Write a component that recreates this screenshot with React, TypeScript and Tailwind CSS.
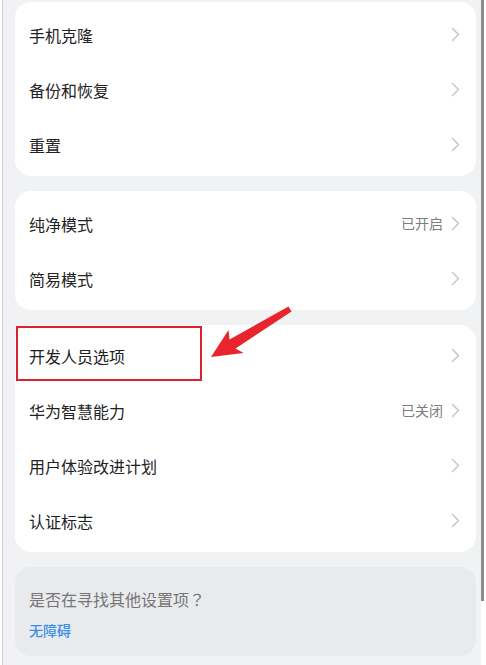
import React from "react"

type Item = { label: string; value?: string }

const groups: Item[][] = [
  [{ label: "手机克隆" }, { label: "备份和恢复" }, { label: "重置" }],
  [{ label: "纯净模式", value: "已开启" }, { label: "简易模式" }],
  [
    { label: "开发人员选项" },
    { label: "华为智慧能力", value: "已关闭" },
    { label: "用户体验改进计划" },
    { label: "认证标志" },
  ],
]

function Chevron() {
  return (
    <svg width="9" height="15" viewBox="0 0 9 15" fill="none">
      <path d="M1.5 1.5 L7.5 7.5 L1.5 13.5" stroke="#c6c6c6" strokeWidth="1.5" strokeLinecap="round" strokeLinejoin="round" />
    </svg>
  )
}

function Row({ item }: { item: Item }) {
  return (
    <div className="flex h-[55px] items-center pl-[14px] pr-[16px]">
      <span className="flex-1 text-[16px] text-[#222222]">{item.label}</span>
      {item.value && <span className="mr-[8px] text-[14px] text-[#7d7d7d]">{item.value}</span>}
      <Chevron />
    </div>
  )
}

export default function App() {
  return (
    <div
      lang="zh-CN"
      className="relative h-[665px] w-[486px] overflow-hidden bg-white"
      style={{ fontFamily: '"Noto Sans CJK SC", "Noto Sans", sans-serif' }}
    >
      <div className="ml-[2px] h-full w-[479px] border-l border-[#d2d2d2] bg-[#f1f2f4] pt-[2px]">
        <div className="ml-[12px] flex w-[461px] flex-col gap-[15px]">
          {groups.map((g, i) => (
            <div key={i} className={`relative rounded-[16px] bg-white pb-[4px] ${i === 2 ? "pt-[3px]" : "pt-[5px]"}`}>
              {g.map((item) => (
                <Row key={item.label} item={item} />
              ))}
              {i === 2 && (
                <div className="absolute left-[1px] top-[1px] h-[55px] w-[186px] border-2 border-[#d8242e]" />
              )}
            </div>
          ))}
          <div className="rounded-[16px] bg-[#e9eaec] pl-[14px] pt-[21px] pb-[16px]">
            <div className="text-[16px] leading-[22px] text-[#757575]">
              是否在寻找其他设置项
              <span lang="zh-TW" className="font-['Noto_Sans_CJK_TC',sans-serif]">？</span>
            </div>
            <div className="mt-[10px] text-[14px] leading-[20px] font-medium text-[#3c8fe8]">无障碍</div>
          </div>
        </div>
      </div>

      {/* scrollbar */}
      <div className="absolute left-[481px] top-0 h-[601px] w-[3px] bg-[#8c8c8c]" />

      {/* annotation arrow */}
      <svg className="pointer-events-none absolute left-0 top-0" width="486" height="665">
        <polygon
          points="211,357 228.5,330 229.5,339.5 288.5,306.5 291.5,311.5 235.5,348.5 243.5,353"
          fill="#e8242c"
        />
      </svg>
    </div>
  )
}
